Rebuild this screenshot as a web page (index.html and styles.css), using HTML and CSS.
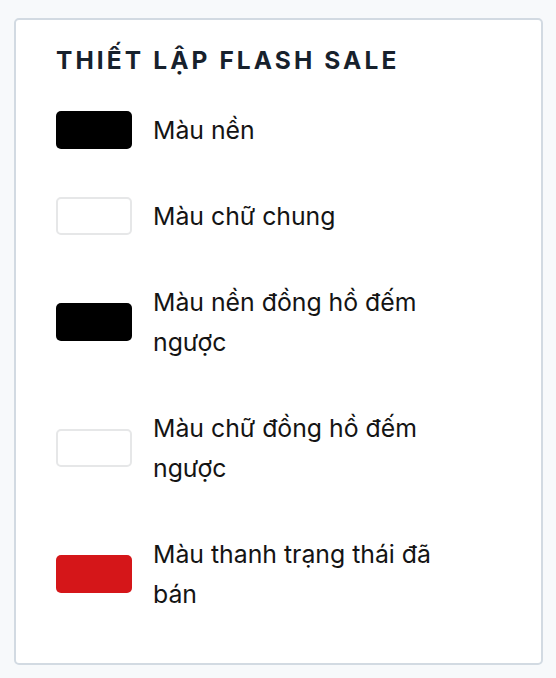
FILE: index.html
```html
<!DOCTYPE html>
<html lang="vi">
<head>
<meta charset="utf-8">
<link rel="stylesheet" href="styles.css">
</head>
<body>
<div class="card">
  <h2 class="title">THIẾT LẬP FLASH SALE</h2>
  <div class="list">
    <div class="row"><span class="swatch swatch-black"></span><span class="label">Màu nền</span></div>
    <div class="row"><span class="swatch swatch-white"></span><span class="label">Màu chữ chung</span></div>
    <div class="row"><span class="swatch swatch-black"></span><span class="label">Màu nền đồng hồ đếm ngược</span></div>
    <div class="row"><span class="swatch swatch-white"></span><span class="label">Màu chữ đồng hồ đếm ngược</span></div>
    <div class="row"><span class="swatch swatch-red"></span><span class="label">Màu thanh trạng thái đã bán</span></div>
  </div>
</div>
</body>
</html>
```
FILE: styles.css
```css
html, body {
  margin: 0;
  padding: 0;
  background: #f7f9fb;
}
body {
  font-family: Inter, "Noto Sans", sans-serif;
  padding: 18px 13px 0 14px;
}
.card {
  box-sizing: border-box;
  width: 529px;
  height: 647px;
  background: #ffffff;
  border: 2px solid #d2dae2;
  border-radius: 5px;
  padding: 22px 40px 0 40px;
}
.title {
  margin: 0;
  font-size: 24.5px;
  line-height: 36px;
  font-weight: 700;
  letter-spacing: 3.1px;
  color: #17212c;
}
.list {
  margin-top: 32px;
  display: flex;
  flex-direction: column;
  gap: 46px;
}
.row {
  display: flex;
  align-items: center;
  gap: 21px;
}
.swatch {
  flex: none;
  box-sizing: border-box;
  width: 76px;
  height: 38px;
  border-radius: 5px;
}
.swatch-black { background: #000000; }
.swatch-white { background: #ffffff; border: 2px solid #e6e7e8; }
.swatch-red { background: #d51619; }
.label {
  width: 310px;
  font-size: 24.8px;
  line-height: 40px;
  color: #141414;
}
```
